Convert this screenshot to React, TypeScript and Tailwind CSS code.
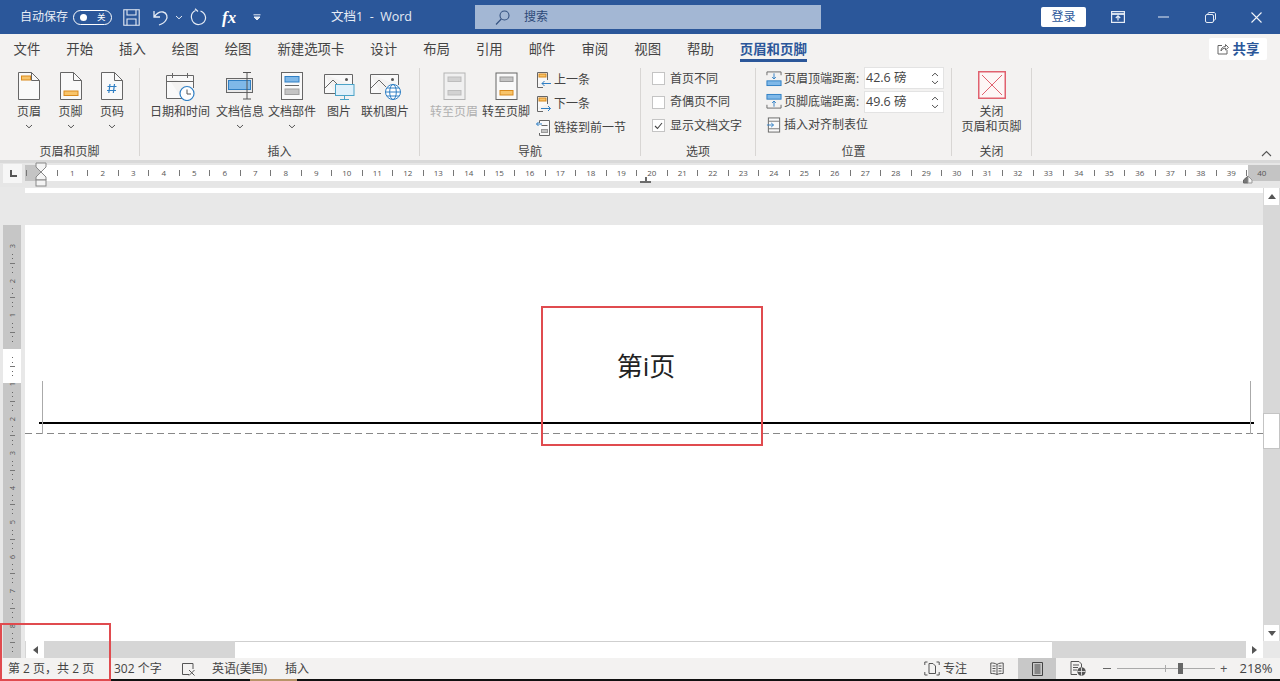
import React from "react";

const G = "#666666";
const BF = "#7fb8e8";
const BS = "#2f7fc4";
const OF = "#f8c46a";
const OS = "#d98a1c";

function Chev({ up = false, color = "#555" }: { up?: boolean; color?: string }) {
  return (
    <svg width="8" height="5" viewBox="0 0 8 5" className="block">
      <path d={up ? "M1 4L4 1.2L7 4" : "M1 1L4 3.8L7 1"} fill="none" stroke={color} strokeWidth="1" />
    </svg>
  );
}

function Doc({ children, stroke = G }: { children?: React.ReactNode; stroke?: string }) {
  return (
    <svg width="24" height="30" viewBox="0 0 24 30" className="block -mt-[1px]">
      <path d="M1.5 1.5H14.5L22.5 9.5V28.5H1.5Z" fill="#f9f9f9" stroke={stroke} />
      <path d="M14.5 1.5V9.5H22.5" fill="none" stroke={stroke} />
      {children}
    </svg>
  );
}

function Calendar() {
  return (
    <svg width="32" height="30" viewBox="0 0 32 30" className="block">
      <path d="M2.5 4.5H29.5V17M2.5 4.5V27.5H18" fill="#f9f9f9" stroke={G} />
      <path d="M2.5 10.5H29.5M8.5 2V7M23.5 2V7" fill="none" stroke={G} />
      <circle cx="23" cy="22.5" r="7" fill="#fff" stroke={BS} strokeWidth="1.2" />
      <path d="M23 18.5V23H27" fill="none" stroke="#555" />
    </svg>
  );
}

function DocInfo() {
  return (
    <svg width="32" height="30" viewBox="0 0 32 30" className="block">
      <rect x="2.5" y="7.5" width="26" height="14" fill="#e9e9e9" stroke={G} />
      <rect x="4.5" y="9.5" width="22" height="9" fill={BF} stroke={BS} />
      <path d="M19 1.5H27M19 28H27M23 1.5V28" fill="none" stroke="#555" />
    </svg>
  );
}

function DocParts() {
  return (
    <svg width="24" height="30" viewBox="0 0 24 30" className="block">
      <rect x="1.5" y="1.5" width="21" height="27" fill="#f9f9f9" stroke={G} />
      <rect x="5" y="5.5" width="14" height="5.5" fill={BF} stroke={BS} />
      <path d="M5 14.5H19" stroke={G} />
      <rect x="5" y="18" width="14" height="5.5" fill="#c4c4c4" stroke="#a0a0a0" />
    </svg>
  );
}

function Picture({ online = false }: { online?: boolean }) {
  return (
    <svg width="32" height="30" viewBox="0 0 32 30" className="block">
      <path d="M1.5 3.5H29.5V14M1.5 3.5V22.5H12" fill="#f9f9f9" stroke={G} />
      <path d="M2 17L10 9L17 16" fill="none" stroke={G} />
      <circle cx="23.5" cy="8.5" r="1.5" fill="#555" />
      {online ? (
        <g fill="#fff" stroke={BS}>
          <circle cx="24" cy="21" r="7.5" />
          <ellipse cx="24" cy="21" rx="3.3" ry="7.5" fill="none" />
          <path d="M16.5 21H31.5M18 17H30M18 25H30" fill="none" />
        </g>
      ) : (
        <g>
          <rect x="12.5" y="13.5" width="18.5" height="11" fill="#dff0fa" stroke="#4aa3c8" />
          <path d="M21.5 24.5V28M17 28.5H26" stroke="#4aa3c8" fill="none" />
        </g>
      )}
    </svg>
  );
}

function Goto({ disabled = false }: { disabled?: boolean }) {
  const s = disabled ? "#b4b4b4" : G;
  const f1 = disabled ? "#d2d2d2" : "#c4c4c4";
  const f2 = disabled ? "#d2d2d2" : OF;
  return (
    <svg width="23" height="28" viewBox="0 0 23 28" className="block -mt-[1px]">
      <rect x="1" y="1" width="21" height="26.5" fill={disabled ? "#f0f0f0" : "#f9f9f9"} stroke={s} />
      <rect x="5" y="5" width="13" height="4.5" fill={f1} stroke={disabled ? "#bdbdbd" : "#999"} />
      <rect x="5" y="18.5" width="13" height="4.5" fill={f2} stroke={disabled ? "#bdbdbd" : OS} />
    </svg>
  );
}

function Nav({ kind }: { kind: "prev" | "next" | "link" }) {
  return (
    <svg width="16" height="18" viewBox="0 0 16 18" className="block">
      {kind === "link" ? (
        <g>
          <path d="M3.5 4V1.5H13.5V16.5H3.5V14" fill="#f9f9f9" stroke={G} />
          <rect x="5.5" y="10.5" width="6" height="3" fill="#c4c4c4" stroke="#999" />
          <path d="M5.5 6.5H11.5" stroke={G} />
          <path d="M0.5 5H6M2.5 3L0.5 5L2.5 7" fill="none" stroke={BS} />
        </g>
      ) : (
        <g>
          <path d="M1.5 13V1.5H11.5V9M1.5 13V16.5H7" fill="#f9f9f9" stroke={G} />
          <rect x="3" y="3" width="7" height="3" fill={OF} stroke={OS} />
          {kind === "prev" ? (
            <path d="M15 12.5H6M8.5 10L6 12.5L8.5 15" fill="none" stroke={BS} />
          ) : (
            <path d="M5 13.5H14.5M12 11L14.5 13.5L12 16" fill="none" stroke={BS} />
          )}
        </g>
      )}
    </svg>
  );
}

function PosIcon({ kind }: { kind: "top" | "bottom" | "tab" }) {
  if (kind === "tab")
    return (
      <svg width="17" height="18" viewBox="0 0 17 18" className="block">
        <rect x="2.5" y="1.5" width="12" height="15" fill="#f9f9f9" stroke={G} />
        <path d="M2.5 5H14.5M2.5 13H14.5" stroke="#777" />
        <path d="M1 9H8M5.5 6.8L8 9L5.5 11.2" fill="none" stroke={BS} />
      </svg>
    );
  return (
    <svg width="17" height="17" viewBox="0 0 17 17" className="block">
      {kind === "top" ? (
        <g>
          <path d="M1 5V1.5H16V5" fill="none" stroke={G} />
          <rect x="1" y="11" width="15" height="5" fill={BF} stroke={BS} />
          <path d="M8.5 3V9M6.5 7L8.5 9L10.5 7" fill="none" stroke={BS} />
        </g>
      ) : (
        <g>
          <rect x="1" y="1" width="15" height="5" fill={BF} stroke={BS} />
          <path d="M1 12V15.5H16V12" fill="none" stroke={G} />
          <path d="M8.5 14V8M6.5 10L8.5 8L10.5 10" fill="none" stroke={BS} />
        </g>
      )}
    </svg>
  );
}

function Btn({
  w,
  icon,
  label,
  chev = false,
  muted = false,
}: {
  w: string;
  icon: React.ReactNode;
  label: string;
  chev?: boolean;
  muted?: boolean;
}) {
  return (
    <div className={`${w} flex flex-col items-center shrink-0`}>
      <div className="h-[30px] flex items-center justify-center">{icon}</div>
      <div className={`mt-[1px] h-[20px] leading-[20px] text-[12px] whitespace-nowrap ${muted ? "text-[#b0b0b0]" : "text-[#444]"}`}>
        {label}
      </div>
      {chev && (
        <div className="h-[9px] flex items-center justify-center">
          <Chev />
        </div>
      )}
    </div>
  );
}

function Group({ w, label, className = "", children }: { w: string; label: string; className?: string; children: React.ReactNode }) {
  return (
    <div className={`${w} shrink-0 flex`}>
      <div className="flex-1 flex flex-col min-w-0">
        <div className={`flex-1 flex ${className}`}>{children}</div>
        <div className="h-[17px] leading-[17px] text-center text-[12px] text-[#444]">{label}</div>
      </div>
      <div className="w-px bg-[#d8d6d4] mt-[4px] mb-[4px]" />
    </div>
  );
}

function Check({ on = false, label }: { on?: boolean; label: string }) {
  return (
    <div className="h-[23.5px] flex items-center gap-[5px] text-[12px] text-[#444]">
      <div className="w-[13px] h-[13px] bg-white border border-[#c4c4c4] flex items-center justify-center">
        {on && (
          <svg width="9" height="8" viewBox="0 0 9 8">
            <path d="M1 4L3.5 6.5L8 1" fill="none" stroke="#444" strokeWidth="1.1" />
          </svg>
        )}
      </div>
      <span>{label}</span>
    </div>
  );
}

function Spin({ value }: { value: string }) {
  return (
    <div className="w-[80px] h-[22px] bg-white border border-[#e3e3e3] flex items-center pl-[1px] pr-[4px]">
      <span className="flex-1 text-[12.5px] text-[#444] whitespace-nowrap">{value}</span>
      <div className="flex flex-col gap-[3px]">
        <Chev up />
        <Chev />
      </div>
    </div>
  );
}

function SmallRow({ icon, label, h = "h-[24px]" }: { icon: React.ReactNode; label: string; h?: string }) {
  return (
    <div className={`${h} flex items-center gap-[2px] text-[12px] text-[#444] whitespace-nowrap`}>
      <div className="w-[16px] flex justify-center">{icon}</div>
      <span>{label}</span>
    </div>
  );
}

const tabs = ["文件", "开始", "插入", "绘图", "绘图", "新建选项卡", "设计", "布局", "引用", "邮件", "审阅", "视图", "帮助"];
const ruler = Array.from({ length: 40 }, (_, i) => i + 1);
const vCells = ["3", "2", "1", "", "1", "2", "3", "4", "5", "6", "7", "8"];

function VCell({ n }: { n: string }) {
  return (
    <div className="h-[34.5px] shrink-0 flex flex-col items-center justify-between pb-[4px]">
      <div className="h-[8px] flex items-center justify-center text-[7.5px] leading-[8px] text-[#555] rotate-[-90deg]">{n}</div>
      <div className="w-px h-px bg-[#666]" />
      <div className="w-px h-px bg-[#666]" />
      <div className="w-[5px] h-px bg-[#777]" />
      <div className="w-px h-px bg-[#666]" />
      <div className="w-px h-px bg-[#666]" />
    </div>
  );
}

export default function App() {
  return (
    <div className="relative w-[1280px] h-[681px] overflow-hidden flex flex-col bg-[#e8e8e8] [font-family:'Open_Sans','Noto_Sans_CJK_SC',sans-serif]">
      {/* Title bar */}
      <div className="h-[34px] shrink-0 bg-[#2b579a] flex items-center text-white">
        <span className="ml-[20px] text-[12px] w-[48px] whitespace-nowrap text-[#e6ecf5]">自动保存</span>
        <div className="ml-[5px] w-[39px] h-[15px] rounded-full border border-white flex items-center pl-[6px] gap-[10px]">
          <div className="w-[7px] h-[7px] rounded-full bg-white" />
          <span className="text-[8.5px] leading-none">关</span>
        </div>
        <svg width="17" height="17" viewBox="0 0 17 17" className="ml-[11px]" fill="none" stroke="#e6ecf5" strokeWidth="1.1">
          <path d="M0.8 0.8H16.2V16.2H0.8Z" />
          <path d="M4 0.8V6H13V0.8M4 16.2V10H13V16.2" />
        </svg>
        <svg width="17" height="17" viewBox="0 0 17 17" className="ml-[12px]" fill="none" stroke="#e6ecf5" strokeWidth="1.3">
          <path d="M2 2V8H8M2 8C5 4 8 2.5 11 3C15 4 16 8 14 11C13 13 10 15 7 16" />
        </svg>
        <div className="ml-[6px]">
          <Chev color="#e6ecf5" />
        </div>
        <svg width="17" height="18" viewBox="0 0 17 18" className="ml-[7px]" fill="none" stroke="#e6ecf5" strokeWidth="1.2">
          <path d="M5.5 2.5C2.5 4 1 7 1.5 10C2 14 5.5 17 9 16.5C13 16 16 13 15.5 9C15 6 13 4 10.5 3" />
          <path d="M5 0.8L8 3.5" />
        </svg>
        <span className="ml-[15px] w-[14px] text-[17px] leading-none italic font-bold [font-family:'Liberation_Serif',serif] whitespace-nowrap">fx</span>
        <svg width="8" height="7" viewBox="0 0 8 7" className="ml-[17px]" fill="none" stroke="#e6ecf5">
          <path d="M0.5 0.8H7.5" />
          <path d="M1 3L4 6L7 3Z" fill="#e6ecf5" />
        </svg>
        <span className="ml-[70px] w-[82px] text-[12.5px] whitespace-pre text-[#e6ecf5]">文档1  -  Word</span>
        <div className="ml-[62px] w-[346px] h-[24px] bg-[#a3b7d4] flex items-center">
          <svg width="15" height="15" viewBox="0 0 15 15" className="ml-[20px]" fill="none" stroke="#33507f" strokeWidth="1.1">
            <circle cx="9.5" cy="5.5" r="4.5" />
            <path d="M6.3 9L1 14.5" />
          </svg>
          <span className="ml-[14px] text-[12px] text-[#2e4a78]">搜索</span>
        </div>
        <div className="ml-[220px] w-[45px] h-[20px] bg-white rounded-[2px] flex items-center justify-center text-[12px] text-[#2b579a]">登录</div>
        <svg width="14" height="12" viewBox="0 0 14 12" className="ml-[25px]" fill="none" stroke="#e6ecf5" strokeWidth="1.2">
          <rect x="0.6" y="0.6" width="12.8" height="10.8" />
          <path d="M0.6 3H13.4" strokeWidth="1.8" />
          <path d="M7 9.5V5M4.8 7L7 4.8L9.2 7" />
        </svg>
        <svg width="11" height="2" viewBox="0 0 11 2" className="ml-[33px]" stroke="#e6ecf5">
          <path d="M0 1H11" />
        </svg>
        <svg width="11" height="11" viewBox="0 0 11 11" className="ml-[36px]" fill="none" stroke="#e6ecf5">
          <rect x="0.5" y="2.5" width="8" height="8" rx="1.5" />
          <path d="M3 2.5V1.5C3 1 3.5 0.5 4 0.5H9C9.8 0.5 10.5 1.2 10.5 2V7C10.5 7.5 10 8 9.5 8H8.5" />
        </svg>
        <svg width="11" height="11" viewBox="0 0 11 11" className="ml-[35px]" fill="none" stroke="#f2f5fa" strokeWidth="1.1">
          <path d="M0.5 0.5L10.5 10.5M10.5 0.5L0.5 10.5" />
        </svg>
      </div>

      {/* Tabs */}
      <div className="h-[30px] shrink-0 bg-[#f3f2f1] flex items-center pl-[13.5px] pr-[13px] text-[13.4px] text-[#444]">
        <div className="flex items-center gap-[26px] whitespace-nowrap">
          {tabs.map((t, i) => (
            <span key={i}>{t}</span>
          ))}
          <div className="relative font-bold text-[#2b579a]">
            页眉和页脚
            <div className="absolute left-0 right-0 top-[20px] h-[3px] bg-[#2b579a]" />
          </div>
        </div>
        <div className="ml-auto w-[58px] h-[22px] bg-white rounded-[2px] flex items-center justify-center gap-[4px] font-bold text-[#2b579a]">
          <svg width="12" height="12" viewBox="0 0 12 12" fill="none" stroke="#666">
            <path d="M5 2.5H1V11H10V7M4 8C4 5 6 3.5 8.5 3.5V1.5L11.5 4.5L8.5 7V5.2C6.5 5.2 5 6 4 8Z" />
          </svg>
          <span>共享</span>
        </div>
      </div>

      {/* Ribbon */}
      <div className="h-[96px] shrink-0 bg-[#f3f2f1] flex relative">
        <Group w="w-[140px]" label="页眉和页脚" className="pl-[8px] pt-[7px]">
          <Btn w="w-[42px]" chev label="页眉" icon={<Doc><rect x="4.5" y="5" width="9" height="4" fill={OF} stroke={OS} /></Doc>} />
          <Btn w="w-[41px]" chev label="页脚" icon={<Doc><rect x="5" y="20" width="14" height="4.5" fill={OF} stroke={OS} /></Doc>} />
          <Btn
            w="w-[42px]"
            chev
            label="页码"
            icon={
              <Doc>
                <path d="M10 13L8.8 22M14.5 13L13.3 22M7.5 15.5H16.5M7 19.5H16" fill="none" stroke={BS} strokeWidth="1.2" />
              </Doc>
            }
          />
        </Group>
        <Group w="w-[280px]" label="插入" className="pl-[10px] pt-[7px]">
          <Btn w="w-[60px]" label="日期和时间" icon={<Calendar />} />
          <Btn w="w-[60px]" chev label="文档信息" icon={<DocInfo />} />
          <Btn w="w-[44px]" chev label="文档部件" icon={<DocParts />} />
          <Btn w="w-[50px]" label="图片" icon={<Picture />} />
          <Btn w="w-[42px]" label="联机图片" icon={<Picture online />} />
        </Group>
        <Group w="w-[221px]" label="导航" className="pl-[8px] pt-[7px]">
          <Btn w="w-[52px]" muted label="转至页眉" icon={<Goto disabled />} />
          <Btn w="w-[52px]" label="转至页脚" icon={<Goto />} />
          <div className="ml-[4px] -mt-[3px] flex flex-col">
            <SmallRow icon={<Nav kind="prev" />} label="上一条" />
            <SmallRow icon={<Nav kind="next" />} label="下一条" />
            <SmallRow icon={<Nav kind="link" />} label="链接到前一节" />
          </div>
        </Group>
        <Group w="w-[115px]" label="选项" className="flex-col pl-[11px] pt-[3px]">
          <Check label="首页不同" />
          <Check label="奇偶页不同" />
          <Check on label="显示文档文字" />
        </Group>
        <Group w="w-[196px]" label="位置" className="pl-[10px] pt-[3px]">
          <div className="w-[95px] flex flex-col">
            <SmallRow h="h-[23px]" icon={<PosIcon kind="top" />} label="页眉顶端距离:" />
            <SmallRow h="h-[23px]" icon={<PosIcon kind="bottom" />} label="页脚底端距离:" />
            <SmallRow h="h-[23px]" icon={<PosIcon kind="tab" />} label="插入对齐制表位" />
          </div>
          <div className="ml-[3px] flex flex-col gap-[2px]">
            <Spin value="42.6 磅" />
            <Spin value="49.6 磅" />
          </div>
        </Group>
        <Group w="w-[80px]" label="关闭" className="flex-col items-center pt-[7px]">
          <svg width="28" height="28" viewBox="0 0 28 28" className="block">
            <rect x="0.75" y="0.75" width="26.5" height="26.5" fill="#fdf6f6" stroke="#e0616f" strokeWidth="1.5" />
            <path d="M4 4L24 24M24 4L4 24" stroke="#e0616f" />
          </svg>
          <div className="mt-[5px] text-[12px] leading-[15px] text-center text-[#444] whitespace-nowrap">
            关闭
            <br />
            页眉和页脚
          </div>
        </Group>
        <div className="absolute right-[8px] bottom-[3px]">
          <svg width="11" height="7" viewBox="0 0 11 7" fill="none" stroke="#555" strokeWidth="1.1">
            <path d="M1 6L5.5 1.5L10 6" />
          </svg>
        </div>
      </div>

      {/* Ruler band */}
      <div className="h-[27px] shrink-0 bg-[#e6e6e6] border-t-[3px] border-[#d9d9d9] flex items-start pt-[1px]">
        <div className="ml-[3px] w-[19px] h-[19px] bg-[#f6f6f6] flex items-center justify-center">
          <svg width="8" height="8" viewBox="0 0 8 8">
            <path d="M1 0H3V5H8V7H1Z" fill="#555" />
          </svg>
        </div>
        <div className="relative ml-[3px] mt-[1px] w-[1255px] h-[16px] bg-white flex items-center text-[8px] text-[#555]">
          <div className="absolute left-0 top-0 bottom-0 w-[16px] bg-[#c4c4c4]" />
          <div className="absolute right-0 top-0 bottom-0 w-[32px] bg-[#c4c4c4]" />
          <div className="relative w-[31.5px] shrink-0 flex">
            <span className="ml-px w-px h-[6px] bg-[#777]" />
          </div>
          {ruler.map((n) => (
            <div key={n} className="relative w-[30.5px] shrink-0 flex items-center">
              <span className="w-px h-[6px] bg-[#777]" />
              <span className="flex-1 text-center leading-none">{n}</span>
            </div>
          ))}
          <svg width="12" height="26" viewBox="0 0 12 26" className="absolute left-[10px] top-[-3px]">
            <path d="M1 1H11V5L6 10L1 5Z" fill="#f4f4f4" stroke="#888" />
            <path d="M6 10L11 15V18H1V15Z" fill="#f4f4f4" stroke="#888" />
            <rect x="1" y="18" width="10" height="6" fill="#f4f4f4" stroke="#888" />
          </svg>
          <svg width="12" height="7" viewBox="0 0 12 7" className="absolute left-[615px] top-[12px]">
            <path d="M6 0V4M0 5H11" stroke="#444" strokeWidth="1.6" />
          </svg>
          <svg width="12" height="9" viewBox="0 0 12 9" className="absolute left-[1218px] top-[10px]">
            <path d="M5 8H0.5V5L5 1Z" fill="#777" stroke="#666" />
            <path d="M5 1L9 5V8H5Z" fill="#f4f4f4" stroke="#999" />
          </svg>
        </div>
      </div>

      {/* Document area */}
      <div className="h-[471px] shrink-0 flex">
        <div className="w-[25px] shrink-0 flex flex-col pl-[3px] pt-[38px]">
          <div className="relative w-[18px] flex-1 bg-[#c6c6c6] overflow-hidden flex flex-col pt-[17px]">
            <div className="absolute left-0 right-0 top-[124px] h-[34px] bg-white" />
            <div className="relative flex flex-col">
              {vCells.map((n, i) => (
                <VCell key={i} n={n} />
              ))}
            </div>
          </div>
        </div>

        <div className="w-[1238px] shrink-0 flex flex-col">
          <div className="h-[5px] mt-px bg-white" />
          <div className="h-[32px] bg-[#e8e8e8]" />
          <div className="flex-1 bg-white flex flex-col items-center pt-[125px] relative">
            <div className="pl-[4px] h-[32px] leading-[32px] text-[26px] text-[#222] whitespace-nowrap">第i页</div>
            <div className="mt-[40px] ml-[14px] mr-[9px] self-stretch h-[2px] bg-black" />
            <div className="mt-[9px] self-stretch h-px bg-[repeating-linear-gradient(90deg,#888_0,#888_7px,transparent_7px,transparent_11px)]" />
            <div className="absolute left-[17px] top-[156px] w-px h-[53px] bg-[#aaa]" />
            <div className="absolute left-[1225px] top-[156px] w-px h-[53px] bg-[#aaa]" />
          </div>
          <div className="h-[17px] bg-[#d6d6d6] flex items-stretch">
            <div className="ml-px w-[18px] bg-white flex items-center justify-center">
              <svg width="5" height="8" viewBox="0 0 5 8"><path d="M5 0V8L0 4Z" fill="#555" /></svg>
            </div>
            <div className="ml-[191px] w-[817px] bg-white border-t border-[#cfcfcf]" />
            <div className="ml-auto w-[17px] bg-white flex items-center justify-center">
              <svg width="5" height="8" viewBox="0 0 5 8"><path d="M0 0V8L5 4Z" fill="#555" /></svg>
            </div>
          </div>
        </div>

        <div className="w-[17px] shrink-0 flex flex-col">
          <div className="h-px" />
          <div className="flex-1 bg-[#d8d8d8] flex flex-col items-stretch">
            <div className="h-[17px] bg-white mx-px flex items-center justify-center">
              <svg width="8" height="5" viewBox="0 0 8 5"><path d="M0 5H8L4 0Z" fill="#555" /></svg>
            </div>
            <div className="mt-[208px] h-[36px] bg-white border border-[#c4c4c4]" />
            <div className="mt-auto h-[16px] bg-white mx-px flex items-center justify-center">
              <svg width="8" height="5" viewBox="0 0 8 5"><path d="M0 0H8L4 5Z" fill="#555" /></svg>
            </div>
          </div>
          <div className="h-[17px] bg-[#e8e8e8]" />
        </div>
      </div>

      {/* Status bar */}
      <div className="h-[21px] shrink-0 bg-[#f3f2f1] flex items-center text-[12px] text-[#444] whitespace-nowrap">
        <span className="ml-[8px] w-[106px]">第 2 页，共 2 页</span>
        <span className="w-[67px]">302 个字</span>
        <svg width="15" height="14" viewBox="0 0 15 14" fill="none" stroke="#555" className="w-[15px]">
          <path d="M8 12.5H1.5V1.5H12V7" />
          <path d="M8 8L13.5 13.5M13.5 8L8 13.5" />
        </svg>
        <span className="ml-[16px] w-[73px]">英语(美国)</span>
        <span>插入</span>

        <svg width="16" height="15" viewBox="0 0 16 15" fill="none" stroke="#555" className="ml-[615px]">
          <path d="M0.8 4V1H3.5M15.2 4V1H12.5M0.8 11V14H3.5M15.2 11V14H12.5" />
          <path d="M5 2.5H9L11.5 5V12.5H5Z" />
        </svg>
        <span className="ml-[3px]">专注</span>
        <svg width="14" height="13" viewBox="0 0 14 13" fill="none" stroke="#555" className="ml-[23px]">
          <path d="M7 2.5C5 1 3 1 0.8 1V11.5C3 11.5 5 11.5 7 12.5C9 11.5 11 11.5 13.2 11.5V1C11 1 9 1 7 2.5ZM7 2.5V12.5M2.5 4H5.5M2.5 6.5H5.5M2.5 9H5.5M8.5 4H11.5M8.5 6.5H11.5M8.5 9H11.5" />
        </svg>
        <div className="ml-[14px] w-[38px] h-full bg-[#c8c8c8] flex items-center justify-center">
          <svg width="11" height="14" viewBox="0 0 11 14" fill="none" stroke="#444">
            <path d="M0.5 0.5H10.5V13.5H0.5ZM2.5 3H8.5M2.5 5H8.5M2.5 7H8.5M2.5 9H8.5M2.5 11H8.5" />
          </svg>
        </div>
        <svg width="16" height="15" viewBox="0 0 16 15" className="ml-[14px]">
          <path d="M1 0.5H9L11.5 3V7M1 0.5V13.5H7" fill="none" stroke="#555" />
          <path d="M3 4H9M3 6.5H8M3 9H7" stroke="#555" />
          <circle cx="11.5" cy="10.5" r="4.2" fill="#555" />
          <path d="M7.5 10.5H15.5M11.5 6.5V14.5" stroke="#f3f2f1" strokeWidth="0.8" />
        </svg>
        <span className="ml-[17px] w-[8px] h-px bg-[#666]" />
        <div className="relative ml-[6px] w-[98px] h-px bg-[#aaa]">
          <div className="absolute left-[48px] top-[-3px] w-px h-[7px] bg-[#aaa]" />
          <div className="absolute left-[61px] top-[-5px] w-[5px] h-[11px] bg-[#666]" />
        </div>
        <span className="ml-[5px] text-[13px] leading-none text-[#555]">+</span>
        <span className="ml-[12px] text-[13px]">218%</span>
      </div>

      {/* Bottom edge */}
      <div className="flex-1 bg-[#111] flex">
        <div className="ml-[250px] w-[47px] bg-[#b89468]" />
      </div>

      {/* Annotations */}
      <div className="absolute left-[541px] top-[306px] w-[222px] h-[140px] border-2 border-[#e04b4f]" />
      <div className="absolute left-0 top-[623px] w-[111px] h-[58px] border-2 border-[#e04b4f]" />
    </div>
  );
}
